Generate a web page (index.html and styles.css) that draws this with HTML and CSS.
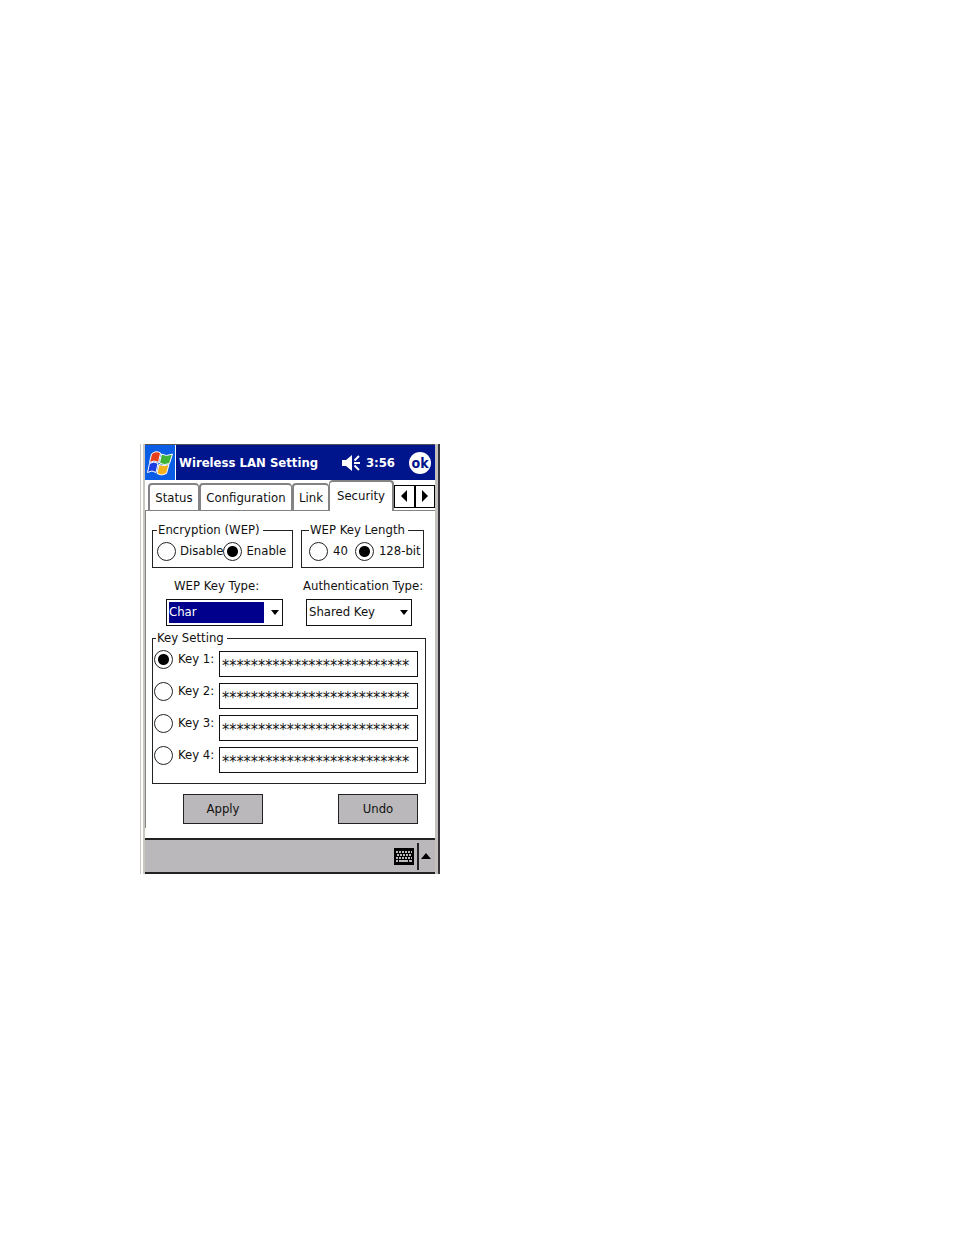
FILE: index.html
```html
<!DOCTYPE html>
<html lang="en">
<head>
<meta charset="utf-8">
<title>Wireless LAN Setting</title>
<link rel="stylesheet" href="styles.css">
</head>
<body>
<main class="page">
<div class="device">
<div class="screen">
  <header class="titlebar">
    <button class="start" aria-label="Start">
      <svg width="26" height="26" viewBox="0 0 26 26">
        <g stroke="#fff" stroke-width="1">
          <path fill="#e8401c" d="M4.500 4Q9 0 13.500 3L11.500 12.500Q7.500 9.500 2.500 12.500z"/>
          <path fill="#3eb43a" d="M14.500 4Q19 7 25.500 4L22.500 13.500Q17 16 12.500 13z"/>
          <path fill="#1c3ee0" d="M2.500 13.500Q7 10.500 11 13.500L9 22.500Q5 19.500 .500 22.500z"/>
          <path fill="#f2b21c" d="M12 14.500Q17 17 22 14.500L19.500 23.500Q14 26.500 10 23.500z"/>
        </g>
      </svg>
    </button>
    <h1 class="title">Wireless LAN Setting</h1>
    <svg class="speaker" width="20" height="18" viewBox="0 0 20 18" fill="#fff" stroke="#fff">
      <path stroke="none" d="M1 6h4l6-5v16l-6-5H1z"/>
      <path stroke-width="2" fill="none" d="M13.500 6.500l4.500-4.500M13 9h6M13.500 11.500l4.500 4.500"/>
    </svg>
    <time class="clock">3:56</time>
    <button class="ok">ok</button>
  </header>
  <nav class="tabs">
    <button class="tab">Status</button>
    <button class="tab">Configuration</button>
    <button class="tab tab-last">Link</button>
    <button class="tab active">Security</button>
    <div class="scroll">
      <button aria-label="Previous tabs"><svg width="6" height="12" viewBox="0 0 6 12"><path d="M6 0v12L0 6z"/></svg></button>
      <button aria-label="Next tabs"><svg width="6" height="12" viewBox="0 0 6 12"><path d="M0 0v12l6-6z"/></svg></button>
    </div>
  </nav>
  <form class="panel">
    <div class="groups">
      <fieldset class="group encryption">
        <legend>Encryption (WEP)</legend>
        <label class="choice"><input type="radio" name="wep">Disable</label>
        <label class="choice"><input type="radio" name="wep" checked>Enable</label>
      </fieldset>
      <fieldset class="group length">
        <legend>WEP Key Length</legend>
        <label class="choice"><input type="radio" name="bits">40</label>
        <label class="choice"><input type="radio" name="bits" checked>128-bit</label>
      </fieldset>
    </div>
    <div class="types">
      <div class="type keytype">
        <label for="keytype">WEP Key Type:</label>
        <div class="combo">
          <select id="keytype" class="selected"><option>Char</option></select>
          <svg width="8" height="5" viewBox="0 0 8 5"><path d="M0 0h8L4 5z"/></svg>
        </div>
      </div>
      <div class="type auth">
        <label for="auth">Authentication Type:</label>
        <div class="combo">
          <select id="auth"><option>Shared Key</option></select>
          <svg width="8" height="5" viewBox="0 0 8 5"><path d="M0 0h8L4 5z"/></svg>
        </div>
      </div>
    </div>
    <fieldset class="group keys">
      <legend>Key Setting</legend>
      <div class="key"><label class="choice"><input type="radio" name="key" checked>Key 1:</label><input class="value" aria-label="Key 1 value" value="**************************"></div>
      <div class="key"><label class="choice"><input type="radio" name="key">Key 2:</label><input class="value" aria-label="Key 2 value" value="**************************"></div>
      <div class="key"><label class="choice"><input type="radio" name="key">Key 3:</label><input class="value" aria-label="Key 3 value" value="**************************"></div>
      <div class="key"><label class="choice"><input type="radio" name="key">Key 4:</label><input class="value" aria-label="Key 4 value" value="**************************"></div>
    </fieldset>
    <div class="actions">
      <button type="button">Apply</button>
      <button type="button">Undo</button>
    </div>
  </form>
  <footer class="bar">
    <button class="keyboard" aria-label="Keyboard">
      <svg width="20" height="17" viewBox="0 0 20 17">
        <path d="M0 0h20v17H0z"/>
        <path stroke="#bab8ba" stroke-width="2" stroke-dasharray="2 1" d="M2 4h16M3 7h15M2 10h16"/>
        <path fill="#bab8ba" d="M2 12h2v2H2zM5 12h9v2H5zM15 12h3v2h-3z"/>
      </svg>
    </button>
    <button class="more" aria-label="Input options"><svg width="10" height="6" viewBox="0 0 10 6"><path d="M0 6h10L5 0z"/></svg></button>
  </footer>
</div>
</div>
</main>
</body>
</html>
```
FILE: styles.css
```css
* { box-sizing: border-box; }
body {
  margin: 0;
  background: #fff;
  color: #111;
  font: 13px/16px "DejaVu Sans Condensed", "DejaVu Sans", sans-serif;
}
button, input, select { font: inherit; color: inherit; margin: 0; }
button { padding: 0; border: 0; background: none; }
svg { display: block; }
.page { padding: 444px 16px 16px 140px; }
.device {
  max-width: 300px;
  border-left: 1px solid #c9c6c0;
  border-right: 2px solid #38363c;
  padding-left: 2px;
}
.screen {
  border-left: 2px solid #c9c6c0;
  border-right: 3px solid #c4c1bc;
}
.titlebar {
  display: flex;
  align-items: center;
  height: 36px;
  background: #00148c;
  color: #fff;
  border-top: 1px solid #555;
}
.start {
  display: grid;
  place-items: center;
  width: 31px;
  height: 35px;
  background: #0a5ee6;
  border-right: 1px solid #fff;
}
.title { flex: 1; margin: 0; padding-left: 3px; font-size: 13px; font-weight: bold; white-space: nowrap; }
.clock { padding: 0 14px 0 5px; font-weight: bold; }
.ok {
  width: 22px;
  height: 22px;
  margin-right: 4px;
  border-radius: 50%;
  background: #fff;
  color: #00148c;
  font-size: 14px;
  font-weight: bold;
  line-height: 20px;
}
.tabs {
  display: flex;
  align-items: flex-end;
  height: 31px;
  padding-left: 3px;
  background: linear-gradient(#848284, #848284) bottom / 100% 1px no-repeat;
}
.tab {
  height: 28px;
  flex: 0 0 auto;
  width: 51px;
  border: solid #848284;
  border-width: 2px 1px 1px 2px;
  border-radius: 4px 4px 0 0;
  white-space: nowrap;
}
.tab:nth-child(2) { width: 93px; }
.tab-last { width: 37px; }
.tab.active { width: 65px; height: 31px; border-width: 2px 2px 0 1px; background: #fff; padding-bottom: 2px; }
.scroll { display: flex; flex: 1; align-self: center; margin-top: 1px; height: 23px; }
.scroll button { flex: 1; display: grid; place-items: center; border: 1px solid #000; }
.panel { border-left: 1px solid #848284; padding: 11px 9px 4px 6px; }
.groups { display: flex; gap: 8px; }
.group { margin: 0; padding: 0; border: 1px solid #222; min-width: 0; }
.group legend { margin-left: 2px; padding: 0 3px 0 1px; line-height: 16px; }
.encryption, .length { display: flex; height: 46px; }
.group.encryption { width: 141px; padding-left: 4px; }
.group.length { width: 123px; padding-left: 7px; gap: 7px; }
.encryption legend, .length legend { margin-left: 0; }
.group.encryption legend { margin-left: 0; }
.choice { display: flex; align-items: center; gap: 5px; height: 26px; white-space: nowrap; }
.encryption .choice { gap: 4px; }
.choice input {
  appearance: none;
  flex: none;
  width: 19px;
  height: 19px;
  border: 1px solid #222;
  border-radius: 50%;
  background: #fff;
}
.choice input:checked { background: radial-gradient(circle, #000 5px, #fff 6px); }
.types { display: flex; gap: 20px; padding: 10px 0 0 14px; }
.type { display: flex; flex-direction: column; align-items: flex-start; gap: 5px; white-space: nowrap; }
.keytype { width: 117px; }
.keytype label { padding-left: 8px; }
.auth .combo { width: 106px; margin-left: 3px; }
.combo { position: relative; width: 117px; }
.combo select {
  appearance: none;
  display: block;
  width: 100%;
  height: 27px;
  padding: 0 18px 2px 2px;
  border: 1px solid #111;
  border-radius: 0;
  background: #fff;
}
.combo .selected {
  color: #fff;
  background: linear-gradient(#00008c, #00008c) 2px 2px / calc(100% - 20px) calc(100% - 4px) no-repeat;
}
.combo svg { position: absolute; right: 4px; top: 11px; pointer-events: none; }
.keys { margin-top: 4px; }
.group.keys { padding: 5px 7px 10px 1px; }
.key { display: flex; }
.key + .key { margin-top: 6px; }
.key .choice { width: 65px; height: 16px; }
.value {
  flex: 1;
  min-width: 0;
  height: 26px;
  padding: 3px 0 0 2px;
  border: 1px solid #111;
  border-radius: 0;
  background: #fff;
  font-size: 16px;
  line-height: 20px;
}
.actions { display: flex; justify-content: space-between; padding: 10px 8px 0 31px; }
.actions button { width: 80px; height: 30px; border: 1px solid #222; background: #bab8ba; }
.bar {
  display: flex;
  justify-content: flex-end;
  align-items: center;
  height: 36px;
  margin-top: 10px;
  border-top: 2px solid #222;
  border-bottom: 2px solid #222;
  background: #bab8ba;
}
.keyboard { padding-right: 3px; border-right: 2px solid #222; height: 27px; }
.more { width: 16px; padding-left: 2px; }
```
